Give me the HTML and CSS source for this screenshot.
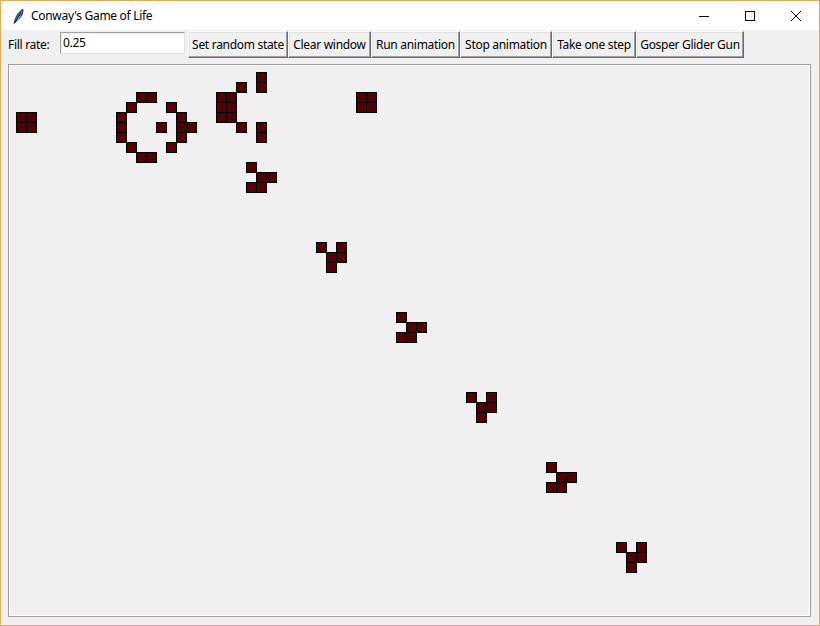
FILE: index.html
```
<!DOCTYPE html>
<html>
<head>
<meta charset="utf-8">
<title>Conway's Game of Life</title>
<link rel="stylesheet" href="styles.css">
</head>
<body>
<div class="window">
  <div class="titlebar">
    <svg class="app-icon" width="16" height="16" viewBox="0 0 16 16">
      <path d="M3.2 15.2 C4 10.5 6.5 4.5 11.8 1.2 C12.6 3.8 11.2 8.8 5.2 13.2 Z" fill="#3d6fb5" stroke="#1a2a44" stroke-width="0.9"/>
      <path d="M3.4 15.6 L9.8 4.2" stroke="#101820" stroke-width="0.8"/>
      <path d="M6 11.5 L8 10.6 M7 9.6 L9.4 8.6" stroke="#9ec0ea" stroke-width="0.7"/>
    </svg>
    <span class="title">Conway's Game of Life</span>
    <div class="controls">
      <span class="ctl"><svg width="12" height="12" viewBox="0 0 12 12"><path d="M1 6.5 H11" stroke="#000" stroke-width="1"/></svg></span>
      <span class="ctl"><svg width="12" height="12" viewBox="0 0 12 12"><rect x="1.5" y="1.5" width="9" height="9" fill="none" stroke="#000" stroke-width="1"/></svg></span>
      <span class="ctl"><svg width="12" height="12" viewBox="0 0 12 12"><path d="M1 1 L11 11 M11 1 L1 11" stroke="#000" stroke-width="1"/></svg></span>
    </div>
  </div>
  <div class="toolbar">
    <span class="label">Fill rate:</span>
    <span class="entry">0.25</span>
    <button class="btn w-set">Set random state</button>
    <button class="btn w-clear">Clear window</button>
    <button class="btn w-run">Run animation</button>
    <button class="btn w-stop">Stop animation</button>
    <button class="btn w-step">Take one step</button>
    <button class="btn w-gun">Gosper Glider Gun</button>
  </div>
  <div class="canvas">
    <div class="grid">
      <i class="cell" style="grid-area:5/1"></i><i class="cell" style="grid-area:5/2"></i><i class="cell" style="grid-area:6/1"></i><i class="cell" style="grid-area:6/2"></i>
      <i class="cell" style="grid-area:3/13"></i><i class="cell" style="grid-area:3/14"></i><i class="cell" style="grid-area:4/12"></i><i class="cell" style="grid-area:5/11"></i><i class="cell" style="grid-area:6/11"></i><i class="cell" style="grid-area:7/11"></i><i class="cell" style="grid-area:8/12"></i><i class="cell" style="grid-area:9/13"></i><i class="cell" style="grid-area:9/14"></i><i class="cell" style="grid-area:6/15"></i><i class="cell" style="grid-area:4/16"></i><i class="cell" style="grid-area:5/17"></i><i class="cell" style="grid-area:6/17"></i><i class="cell" style="grid-area:7/17"></i><i class="cell" style="grid-area:6/18"></i><i class="cell" style="grid-area:8/16"></i>
      <i class="cell" style="grid-area:3/21"></i><i class="cell" style="grid-area:3/22"></i><i class="cell" style="grid-area:4/21"></i><i class="cell" style="grid-area:4/22"></i><i class="cell" style="grid-area:5/21"></i><i class="cell" style="grid-area:5/22"></i><i class="cell" style="grid-area:2/23"></i><i class="cell" style="grid-area:6/23"></i><i class="cell" style="grid-area:1/25"></i><i class="cell" style="grid-area:2/25"></i><i class="cell" style="grid-area:6/25"></i><i class="cell" style="grid-area:7/25"></i>
      <i class="cell" style="grid-area:3/35"></i><i class="cell" style="grid-area:3/36"></i><i class="cell" style="grid-area:4/35"></i><i class="cell" style="grid-area:4/36"></i>
      <i class="cell" style="grid-area:10/24"></i><i class="cell" style="grid-area:11/25"></i><i class="cell" style="grid-area:11/26"></i><i class="cell" style="grid-area:12/24"></i><i class="cell" style="grid-area:12/25"></i>
      <i class="cell" style="grid-area:18/31"></i><i class="cell" style="grid-area:18/33"></i><i class="cell" style="grid-area:19/32"></i><i class="cell" style="grid-area:19/33"></i><i class="cell" style="grid-area:20/32"></i>
      <i class="cell" style="grid-area:25/39"></i><i class="cell" style="grid-area:26/40"></i><i class="cell" style="grid-area:26/41"></i><i class="cell" style="grid-area:27/39"></i><i class="cell" style="grid-area:27/40"></i>
      <i class="cell" style="grid-area:33/46"></i><i class="cell" style="grid-area:33/48"></i><i class="cell" style="grid-area:34/47"></i><i class="cell" style="grid-area:34/48"></i><i class="cell" style="grid-area:35/47"></i>
      <i class="cell" style="grid-area:40/54"></i><i class="cell" style="grid-area:41/55"></i><i class="cell" style="grid-area:41/56"></i><i class="cell" style="grid-area:42/54"></i><i class="cell" style="grid-area:42/55"></i>
      <i class="cell" style="grid-area:48/61"></i><i class="cell" style="grid-area:48/63"></i><i class="cell" style="grid-area:49/62"></i><i class="cell" style="grid-area:49/63"></i><i class="cell" style="grid-area:50/62"></i>
    </div>
  </div>
</div>
</body>
</html>
```
FILE: styles.css
```
* { box-sizing: border-box; }
html, body { margin: 0; padding: 0; }
body {
  width: 820px;
  height: 626px;
  overflow: hidden;
  font-family: "Noto Sans", "Open Sans", sans-serif;
  font-size: 12px;
  letter-spacing: -0.3px;
  color: #000;
}
.window {
  width: 820px;
  height: 626px;
  border: 1px solid #dcab5c;
  background: #f0f0f0;
  display: flex;
  flex-direction: column;
}
.titlebar {
  height: 29px;
  background: #fff;
  display: flex;
  align-items: center;
  flex: none;
}
.app-icon { margin-left: 10px; flex: none; }
.title {
  margin-left: 4px;
  font-size: 12px;
  line-height: 16px;
}
.controls {
  margin-left: auto;
  display: flex;
  height: 29px;
}
.ctl {
  width: 46px;
  height: 29px;
  display: flex;
  align-items: center;
  justify-content: center;
}
.toolbar {
  height: 28px;
  display: flex;
  align-items: center;
  padding-left: 7px;
  padding-top: 1px;
  flex: none;
}
.label {
  width: 52px;
  line-height: 16px;
}
.entry {
  width: 125px;
  height: 22px;
  margin-top: -3px;
  background: #fff;
  border: 1px solid;
  border-color: #a0a0a0 #e3e3e3 #e3e3e3 #a0a0a0;
  box-shadow: inset 1px 1px 0 #f0f0f0;
  padding: 0 2px;
  line-height: 19px;
  margin-right: 3px;
}
.btn {
  height: 27px;
  margin: 0;
  padding: 0;
  font: inherit;
  letter-spacing: inherit;
  color: #000;
  background: #f0f0f0;
  border: 1px solid;
  border-color: #ffffff #696969 #696969 #ffffff;
  box-shadow: inset -1px -1px 0 #a0a0a0, inset 1px 1px 0 #e3e3e3;
  text-align: center;
  line-height: 23px;
  white-space: nowrap;
}
.w-set { width: 100px; }
.w-clear { width: 83px; }
.w-run { width: 89px; }
.w-stop { width: 92px; }
.w-step { width: 84px; }
.w-gun { width: 108px; }
.canvas {
  margin: 6px 8px 8px 7px;
  flex: 1;
  border: 1px solid #a0a0a0;
  box-shadow: inset 0 0 0 1px #ffffff;
  background: #f0f0f0;
  padding: 7px 0 0 7px;
  overflow: hidden;
}
.grid {
  display: grid;
  grid-template-columns: repeat(70, 10px);
  grid-auto-rows: 10px;
}
.cell {
  display: block;
  width: 11px;
  height: 11px;
  background: #550000;
  border: 1px solid #000;
}
```
